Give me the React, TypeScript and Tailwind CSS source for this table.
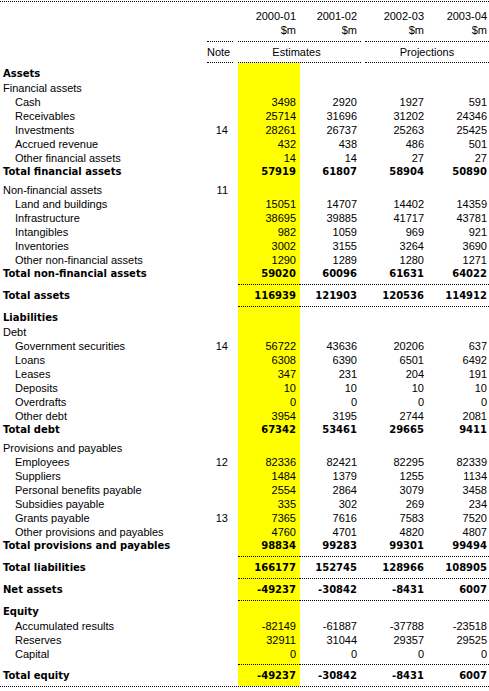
import React from 'react';

const GRID = 'grid grid-cols-[207px_26px_5px_62px_61px_4px_63px_61px]';
const REG = "font-['Liberation_Sans',Arial,sans-serif] text-[11px]";
const BOLD = "font-['DejaVu_Sans',Verdana,sans-serif] font-bold text-[10px]";
const YELLOW = 'bg-[#ffff00]';
const DOT = 'border-t border-dotted border-black';

type Kind = 'head' | 'sub' | 'item' | 'total' | 'grand';

interface RowProps {
  label: string;
  kind: Kind;
  note?: string;
  v?: number[];
}

const Row: React.FC<RowProps> = ({ label, kind, note, v }) => {
  const bold = kind === 'head' || kind === 'total' || kind === 'grand';
  const pad = kind === 'grand' ? 'pt-[4px] pb-[3px]' : '';
  const font = bold ? BOLD : REG;
  return (
    <div className={`${GRID} leading-[14px] ${font}`}>
      <div className={`${pad} ${kind === 'item' ? 'pl-[15px]' : 'pl-[3px]'} whitespace-nowrap`}>{label}</div>
      <div className={`${pad} ${REG} text-right pr-[5px]`}>{note}</div>
      <div />
      <div className={`${pad} ${YELLOW} text-right pr-[4px]`}>{v?.[0]}</div>
      <div className={`${pad} text-right pr-[4px]`}>{v?.[1]}</div>
      <div />
      <div className={`${pad} text-right pr-[4px]`}>{v?.[2]}</div>
      <div className={`${pad} text-right pr-[2px]`}>{v?.[3]}</div>
    </div>
  );
};

const Gap: React.FC<{ h: 3 | 4 }> = ({ h }) => (
  <div className={`${GRID} ${h === 3 ? 'h-[3px]' : 'h-[4px]'}`}>
    <div className={`col-start-4 ${YELLOW}`} />
  </div>
);

const Line: React.FC = () => (
  <div className={GRID}>
    <div className={`col-start-4 ${YELLOW} ${DOT}`} />
    <div className={`col-span-4 ${DOT}`} />
  </div>
);

const FullLine: React.FC = () => <div className={DOT} />;

const HeadLine: React.FC = () => (
  <div className={GRID}>
    <div className={`col-start-2 ${DOT}`} />
    <div className={`col-start-4 col-span-2 ${DOT}`} />
    <div className={`col-start-7 col-span-2 ${DOT}`} />
  </div>
);

const Header: React.FC = () => (
  <div className={REG}>
    <div className="h-[7px]" />
    <div className={`${GRID} leading-[14px]`}>
      <div className="col-start-4 text-right pr-[4px]">2000-01</div>
      <div className="text-right pr-[4px]">2001-02</div>
      <div className="col-start-7 text-right pr-[4px]">2002-03</div>
      <div className="text-right pr-[2px]">2003-04</div>
    </div>
    <div className={`${GRID} leading-[14px]`}>
      <div className="col-start-4 text-right pr-[4px]">$m</div>
      <div className="text-right pr-[4px]">$m</div>
      <div className="col-start-7 text-right pr-[4px]">$m</div>
      <div className="text-right pr-[2px]">$m</div>
    </div>
    <div className="h-[4px]" />
    <HeadLine />
    <div className="h-[3px]" />
    <div className={`${GRID} leading-[14px]`}>
      <div className="col-start-2 text-right pr-[4px]">Note</div>
      <div className="col-start-4 col-span-2 text-center pr-[6px]">Estimates</div>
      <div className="col-start-7 col-span-2 text-center">Projections</div>
    </div>
    <div className="h-[3px]" />
    <HeadLine />
  </div>
);

export default function App() {
  return (
    <div className="w-[489px] bg-white text-black pt-[1px]">
      <FullLine />
      <Header />
      <Gap h={4} />
      <Row kind="head" label="Assets" />
      <Row kind="sub" label="Financial assets" />
      <Row kind="item" label="Cash" v={[3498, 2920, 1927, 591]} />
      <Row kind="item" label="Receivables" v={[25714, 31696, 31202, 24346]} />
      <Row kind="item" label="Investments" note="14" v={[28261, 26737, 25263, 25425]} />
      <Row kind="item" label="Accrued revenue" v={[432, 438, 486, 501]} />
      <Row kind="item" label="Other financial assets" v={[14, 14, 27, 27]} />
      <Row kind="total" label="Total financial assets" v={[57919, 61807, 58904, 50890]} />
      <Gap h={4} />
      <Row kind="sub" label="Non-financial assets" note="11" />
      <Row kind="item" label="Land and buildings" v={[15051, 14707, 14402, 14359]} />
      <Row kind="item" label="Infrastructure" v={[38695, 39885, 41717, 43781]} />
      <Row kind="item" label="Intangibles" v={[982, 1059, 969, 921]} />
      <Row kind="item" label="Inventories" v={[3002, 3155, 3264, 3690]} />
      <Row kind="item" label="Other non-financial assets" v={[1290, 1289, 1280, 1271]} />
      <Row kind="total" label="Total non-financial assets" v={[59020, 60096, 61631, 64022]} />
      <Gap h={3} />
      <Line />
      <Row kind="grand" label="Total assets" v={[116939, 121903, 120536, 114912]} />
      <Line />
      <Gap h={4} />
      <Row kind="head" label="Liabilities" />
      <Row kind="sub" label="Debt" />
      <Row kind="item" label="Government securities" note="14" v={[56722, 43636, 20206, 637]} />
      <Row kind="item" label="Loans" v={[6308, 6390, 6501, 6492]} />
      <Row kind="item" label="Leases" v={[347, 231, 204, 191]} />
      <Row kind="item" label="Deposits" v={[10, 10, 10, 10]} />
      <Row kind="item" label="Overdrafts" v={[0, 0, 0, 0]} />
      <Row kind="item" label="Other debt" v={[3954, 3195, 2744, 2081]} />
      <Row kind="total" label="Total debt" v={[67342, 53461, 29665, 9411]} />
      <Gap h={4} />
      <Row kind="sub" label="Provisions and payables" />
      <Row kind="item" label="Employees" note="12" v={[82336, 82421, 82295, 82339]} />
      <Row kind="item" label="Suppliers" v={[1484, 1379, 1255, 1134]} />
      <Row kind="item" label="Personal benefits payable" v={[2554, 2864, 3079, 3458]} />
      <Row kind="item" label="Subsidies payable" v={[335, 302, 269, 234]} />
      <Row kind="item" label="Grants payable" note="13" v={[7365, 7616, 7583, 7520]} />
      <Row kind="item" label="Other provisions and payables" v={[4760, 4701, 4820, 4807]} />
      <Row kind="total" label="Total provisions and payables" v={[98834, 99283, 99301, 99494]} />
      <Gap h={3} />
      <Line />
      <Row kind="grand" label="Total liabilities" v={[166177, 152745, 128966, 108905]} />
      <Line />
      <Row kind="grand" label="Net assets" v={[-49237, -30842, -8431, 6007]} />
      <Line />
      <Gap h={4} />
      <Row kind="head" label="Equity" />
      <Row kind="item" label="Accumulated results" v={[-82149, -61887, -37788, -23518]} />
      <Row kind="item" label="Reserves" v={[32911, 31044, 29357, 29525]} />
      <Row kind="item" label="Capital" v={[0, 0, 0, 0]} />
      <Gap h={3} />
      <Line />
      <Row kind="grand" label="Total equity" v={[-49237, -30842, -8431, 6007]} />
      <FullLine />
    </div>
  );
}
